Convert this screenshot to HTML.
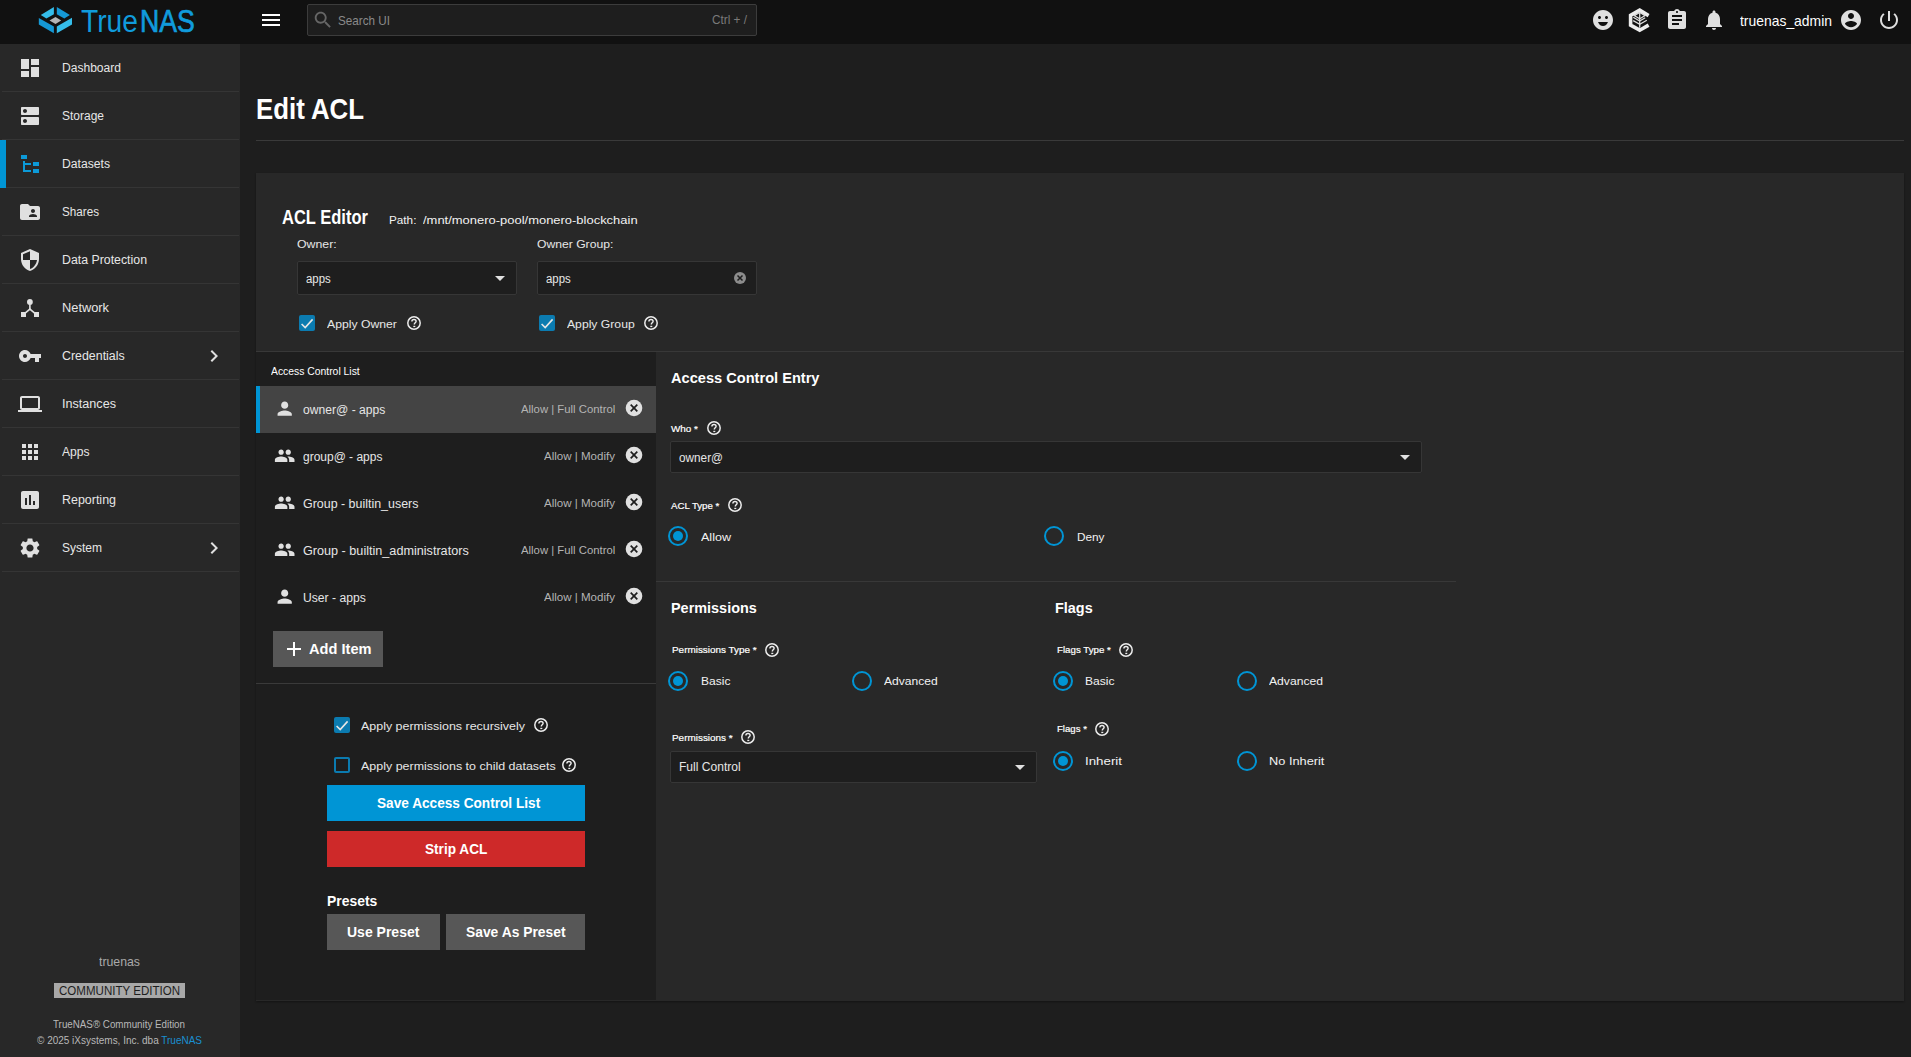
<!DOCTYPE html>
<html><head><meta charset="utf-8"><title>Edit ACL - TrueNAS</title>
<style>
html,body{margin:0;padding:0;width:1911px;height:1057px;overflow:hidden;background:#1e1e1e;}
body{position:relative;font-family:"Liberation Sans",sans-serif;}
.t{position:absolute;white-space:nowrap;line-height:1;transform-origin:0 50%;}
.r{position:absolute;display:block;}
</style></head><body>
<div class="r" style="left:0px;top:0px;width:1911px;height:44px;background:#111111;"></div>
<div class="r" style="left:0px;top:44px;width:240px;height:1013px;background:#282828;"></div>
<div class="r" style="left:240px;top:44px;width:1671px;height:1013px;background:#1e1e1e;"></div>
<svg class="r" style="left:34px;top:2px;" width="44" height="36" viewBox="0 0 44 36">
<polygon fill="#35bdea" points="19.9,5.1 6.8,12.9 12.4,16.5 19.9,12.3"/>
<polygon fill="#1598d5" points="22.8,5.1 35.9,12.9 30.3,16.5 22.8,12.3"/>
<polygon fill="#1598d5" points="4.8,16.0 19.9,24.5 19.9,31.2 4.8,22.6"/>
<polygon fill="#35bdea" points="22.8,24.5 38.0,15.8 38.0,22.6 22.8,31.2"/>
<polygon fill="#b5b5b5" points="21.5,15.0 27.2,18.6 21.5,22.0 15.5,18.6"/>
</svg>
<span id="t1" class="t" style="left:81.0px;top:5.76px;font-size:31px;color:#109bdc;transform:scaleX(0.9106);">True</span>
<span id="t2" class="t" style="left:139.6px;top:5.56px;font-size:31px;color:#109bdc;transform:scaleX(0.8596);-webkit-text-stroke:0.7px #109bdc;">NAS</span>
<svg class="r" style="left:259px;top:8px;" width="24" height="24" viewBox="0 0 24 24"><path fill="#ffffff" d="M3 18h18v-2H3v2zm0-5h18v-2H3v2zm0-7v2h18V6H3z"/></svg>
<div class="r" style="left:307px;top:4px;width:450px;height:32px;background:#1e1e1e;border:1px solid #3c3c3c;border-radius:2px;box-sizing:border-box;"></div>
<svg class="r" style="left:312px;top:9px;" width="22" height="22" viewBox="0 0 24 24"><path fill="#666666" d="M15.5 14h-.79l-.28-.27C15.41 12.59 16 11.11 16 9.5 16 5.91 13.09 3 9.5 3S3 5.91 3 9.5 5.91 16 9.5 16c1.61 0 3.09-.59 4.23-1.57l.27.28v.79l5 4.99L20.49 19l-4.99-5zm-6 0C7.01 14 5 11.99 5 9.5S7.01 5 9.5 5 14 7.01 14 9.5 11.99 14 9.5 14z"/></svg>
<span id="t3" class="t" style="left:338.0px;top:14.00px;font-size:13px;color:#8a8a8a;transform:scaleX(0.8995);">Search UI</span>
<span id="t4" class="t" style="left:712.0px;top:13.84px;font-size:12px;color:#7a7a7a;transform:scaleX(0.9812);">Ctrl + /</span>
<svg class="r" style="left:1591px;top:8px;" width="24" height="24" viewBox="0 0 24 24"><path fill="#e0e0e0" d="M11.99 2C6.47 2 2 6.48 2 12s4.47 10 9.99 10C17.52 22 22 17.52 22 12S17.52 2 11.99 2zM8.5 8c.83 0 1.5.67 1.5 1.5S9.33 11 8.5 11 7 10.33 7 9.5 7.670 8 8.5 8zM12 18c-2.28 0-4.22-1.66-5-4h10c-.78 2.34-2.72 4-5 4zm3.5-7c-.83 0-1.5-.67-1.5-1.5S14.67 8 15.5 8s1.5.67 1.5 1.5-.67 1.5-1.5 1.5z"/></svg>
<svg class="r" style="left:1665px;top:8px;" width="24" height="24" viewBox="0 0 24 24"><path fill="#e0e0e0" d="M19 3h-4.18C14.4 1.84 13.3 1 12 1c-1.3 0-2.4.84-2.82 2H5c-1.1 0-2 .9-2 2v14c0 1.1.9 2 2 2h14c1.1 0 2-.9 2-2V5c0-1.1-.9-2-2-2zm-7 0c.55 0 1 .45 1 1s-.45 1-1 1-1-.45-1-1 .45-1 1-1zm2 14H7v-2h7v2zm3-4H7v-2h10v2zm0-4H7V7h10v2z"/></svg>
<svg class="r" style="left:1624px;top:4px;" width="32" height="32" viewBox="0 0 32 32"><path d="M24.6 11.6L15.7 6.2L6.6 11.3V21.2L15.7 26.2L24.6 21.1" fill="none" stroke="#ececec" stroke-width="3.6" stroke-linejoin="miter"/><g fill="none" stroke="#dcdcdc" stroke-width="1.3"><path d="M10.2 11.6L15.7 8.4L21.2 11.6L15.7 14.8Z"/><path d="M15.7 8.4V23.8"/><path d="M9.2 16.6L15.7 20.3L22.8 16.2"/><path d="M9.2 13.2L15.7 17L21.2 13.8"/></g></svg>
<svg class="r" style="left:1702px;top:8px;" width="24" height="24" viewBox="0 0 24 24"><path fill="#e0e0e0" d="M12 22c1.1 0 2-.9 2-2h-4c0 1.1.89 2 2 2zm6-6v-5c0-3.07-1.64-5.64-4.5-6.32V4c0-.83-.67-1.5-1.5-1.5s-1.5.67-1.5 1.5v.68C7.63 5.36 6 7.92 6 11v5l-2 2v1h16v-1l-2-2z"/></svg>
<span id="t5" class="t" style="left:1740.0px;top:13.30px;font-size:15px;color:#ffffff;transform:scaleX(0.9271);">truenas_admin</span>
<svg class="r" style="left:1839px;top:8px;" width="24" height="24" viewBox="0 0 24 24"><path fill="#e0e0e0" d="M12 2C6.48 2 2 6.48 2 12s4.48 10 10 10 10-4.48 10-10S17.52 2 12 2zm0 3c1.66 0 3 1.34 3 3s-1.34 3-3 3-3-1.34-3-3 1.34-3 3-3zm0 14.2c-2.5 0-4.71-1.28-6-3.22.03-1.99 4-3.08 6-3.08 1.99 0 5.970 1.09 6 3.08-1.29 1.94-3.5 3.22-6 3.22z"/></svg>
<svg class="r" style="left:1877px;top:8px;" width="24" height="24" viewBox="0 0 24 24"><path fill="#e0e0e0" d="M13 3h-2v10h2V3zm4.83 2.17l-1.42 1.42C17.99 7.86 19 9.81 19 12c0 3.87-3.13 7-7 7s-7-3.13-7-7c0-2.19 1.01-4.14 2.58-5.42L6.17 5.17C4.23 6.82 3 9.26 3 12c0 4.97 4.03 9 9 9s9-4.03 9-9c0-2.74-1.23-5.18-3.17-6.83z"/></svg>
<div class="r" style="left:2px;top:91px;width:237px;height:1px;background:#353535;"></div>
<svg class="r" style="left:18px;top:56px;" width="24" height="24" viewBox="0 0 24 24"><path fill="#e0e0e0" d="M3 13h8V3H3v10zm0 8h8v-6H3v6zm10 0h8V11h-8v10zm0-18v6h8V3h-8z"/></svg>
<span id="t6" class="t" style="left:62.0px;top:61.59px;font-size:12.3px;color:#e6e6e6;transform:scaleX(0.9805);">Dashboard</span>
<div class="r" style="left:2px;top:139px;width:237px;height:1px;background:#353535;"></div>
<svg class="r" style="left:18px;top:104px;" width="24" height="24" viewBox="0 0 24 24"><path fill="#e0e0e0" d="M20 13H4c-.55 0-1 .45-1 1v6c0 .55.45 1 1 1h16c.55 0 1-.45 1-1v-6c0-.55-.45-1-1-1zM7 19c-1.1 0-2-.9-2-2s.9-2 2-2 2 .9 2 2-.9 2-2 2zM20 3H4c-.55 0-1 .45-1 1v6c0 .55.45 1 1 1h16c.55 0 1-.45 1-1V4c0-.55-.45-1-1-1zM7 9c-1.1 0-2-.9-2-2s.9-2 2-2 2 .9 2 2-.9 2-2 2z"/></svg>
<span id="t7" class="t" style="left:62.0px;top:109.59px;font-size:12.3px;color:#e6e6e6;transform:scaleX(0.9750);">Storage</span>
<div class="r" style="left:2px;top:187px;width:237px;height:1px;background:#353535;"></div>
<span id="t8" class="t" style="left:62.0px;top:157.59px;font-size:12.3px;color:#e6e6e6;transform:scaleX(0.9891);">Datasets</span>
<div class="r" style="left:2px;top:235px;width:237px;height:1px;background:#353535;"></div>
<svg class="r" style="left:18px;top:200px;" width="24" height="24" viewBox="0 0 24 24"><path fill="#e0e0e0" d="M20 6h-8l-2-2H4c-1.1 0-1.99.9-1.99 2L2 18c0 1.1.9 2 2 2h16c1.1 0 2-.9 2-2V8c0-1.1-.9-2-2-2zm-5 3c1.1 0 2 .9 2 2s-.9 2-2 2-2-.9-2-2 .9-2 2-2zm4 8h-8v-1c0-1.33 2.67-2 4-2s4 .67 4 2v1z"/></svg>
<span id="t9" class="t" style="left:62.0px;top:205.59px;font-size:12.3px;color:#e6e6e6;transform:scaleX(0.9495);">Shares</span>
<div class="r" style="left:2px;top:283px;width:237px;height:1px;background:#353535;"></div>
<svg class="r" style="left:18px;top:248px;" width="24" height="24" viewBox="0 0 24 24"><path fill="#e0e0e0" d="M12 1L3 5v6c0 5.55 3.84 10.74 9 12 5.16-1.26 9-6.450 9-12V5l-9-4zm0 10.99h7c-.53 4.12-3.28 7.79-7 8.94V12H5V6.3l7-3.11v8.8z"/></svg>
<span id="t10" class="t" style="left:62.0px;top:253.59px;font-size:12.3px;color:#e6e6e6;transform:scaleX(1.0028);">Data Protection</span>
<div class="r" style="left:2px;top:331px;width:237px;height:1px;background:#353535;"></div>
<span id="t11" class="t" style="left:62.0px;top:301.59px;font-size:12.3px;color:#e6e6e6;transform:scaleX(1.0419);">Network</span>
<div class="r" style="left:2px;top:379px;width:237px;height:1px;background:#353535;"></div>
<svg class="r" style="left:18px;top:344px;" width="24" height="24" viewBox="0 0 24 24"><path fill="#e0e0e0" d="M12.65 10C11.830 7.67 9.61 6 7 6c-3.31 0-6 2.69-6 6s2.69 6 6 6c2.61 0 4.83-1.67 5.65-4H17v4h4v-4h2v-4H12.65zM7 14c-1.1 0-2-.9-2-2s.9-2 2-2 2 .9 2 2-.9 2-2 2z"/></svg>
<span id="t12" class="t" style="left:62.0px;top:349.59px;font-size:12.3px;color:#e6e6e6;transform:scaleX(1.0080);">Credentials</span>
<svg class="r" style="left:202px;top:344px;" width="24" height="24" viewBox="0 0 24 24"><path fill="#e0e0e0" d="M10 6L8.59 7.41 13.17 12l-4.58 4.59L10 18l6-6z"/></svg>
<div class="r" style="left:2px;top:427px;width:237px;height:1px;background:#353535;"></div>
<svg class="r" style="left:18px;top:392px;" width="24" height="24" viewBox="0 0 24 24"><path fill="#e0e0e0" d="M20 18c1.1 0 1.99-.9 1.99-2L22 6c0-1.1-.9-2-2-2H4c-1.1 0-2 .9-2 2v10c0 1.1.9 2 2 2H0v2h24v-2h-4zM4 6h16v10H4V6z"/></svg>
<span id="t13" class="t" style="left:62.0px;top:397.59px;font-size:12.3px;color:#e6e6e6;transform:scaleX(1.0258);">Instances</span>
<div class="r" style="left:2px;top:475px;width:237px;height:1px;background:#353535;"></div>
<svg class="r" style="left:18px;top:440px;" width="24" height="24" viewBox="0 0 24 24"><path fill="#e0e0e0" d="M4 8h4V4H4v4zm6 12h4v-4h-4v4zm-6 0h4v-4H4v4zm0-6h4v-4H4v4zm6 0h4v-4h-4v4zm6-10v4h4V4h-4zm-6 4h4V4h-4v4zm6 6h4v-4h-4v4zm0 6h4v-4h-4v4z"/></svg>
<span id="t14" class="t" style="left:62.0px;top:445.59px;font-size:12.3px;color:#e6e6e6;transform:scaleX(0.9846);">Apps</span>
<div class="r" style="left:2px;top:523px;width:237px;height:1px;background:#353535;"></div>
<svg class="r" style="left:18px;top:488px;" width="24" height="24" viewBox="0 0 24 24"><path fill="#e0e0e0" d="M19 3H5c-1.1 0-2 .9-2 2v14c0 1.1.9 2 2 2h14c1.1 0 2-.9 2-2V5c0-1.1-.9-2-2-2zM9 17H7v-7h2v7zm4 0h-2V7h2v10zm4 0h-2v-4h2v4z"/></svg>
<span id="t15" class="t" style="left:62.0px;top:493.59px;font-size:12.3px;color:#e6e6e6;transform:scaleX(1.0126);">Reporting</span>
<div class="r" style="left:2px;top:571px;width:237px;height:1px;background:#353535;"></div>
<svg class="r" style="left:18px;top:536px;" width="24" height="24" viewBox="0 0 24 24"><path fill="#e0e0e0" d="M19.14 12.94c.04-.3.06-.61.06-.94 0-.32-.02-.64-.07-.94l2.030-1.58c.18-.14.23-.41.12-.61l-1.92-3.32c-.12-.22-.37-.29-.59-.22l-2.39.96c-.5-.38-1.03-.7-1.62-.94l-.36-2.54c-.04-.24-.24-.41-.48-.41h-3.84c-.24 0-.43.17-.47.41l-.36 2.54c-.59.24-1.13.57-1.62.94l-2.39-.96c-.22-.08-.47 0-.59.22L2.74 8.87c-.12.21-.08.47.12.61l2.03 1.58c-.05.3-.09.63-.09.94s.02.64.07.94l-2.03 1.58c-.18.14-.23.41-.12.61l1.92 3.32c.12.22.37.29.59.22l2.39-.96c.5.38 1.03.7 1.62.94l.36 2.54c.05.24.24.41.48.41h3.84c.24 0 .44-.17.47-.41l.36-2.54c.59-.24 1.13-.56 1.62-.94l2.39.96c.22.08.47 0 .59-.22l1.92-3.32c.12-.22.07-.47-.12-.61l-2.01-1.58zM12 15.6c-1.98 0-3.6-1.62-3.6-3.6s1.62-3.6 3.6-3.6 3.6 1.62 3.6 3.6-1.62 3.6-3.6 3.6z"/></svg>
<span id="t16" class="t" style="left:62.0px;top:541.59px;font-size:12.3px;color:#e6e6e6;transform:scaleX(0.9756);">System</span>
<svg class="r" style="left:202px;top:536px;" width="24" height="24" viewBox="0 0 24 24"><path fill="#e0e0e0" d="M10 6L8.59 7.41 13.17 12l-4.58 4.59L10 18l6-6z"/></svg>
<div class="r" style="left:0px;top:140px;width:6px;height:48px;background:#0095d5;"></div>
<svg class="r" style="left:21px;top:155px;" width="18" height="18" viewBox="0 0 18 18"><g fill="#0c9ad8"><rect x="0" y="0" width="6" height="4"/><rect x="2" y="6" width="2" height="11"/><rect x="4" y="8" width="6" height="2"/><rect x="2" y="15" width="8" height="2"/><rect x="12" y="7" width="6" height="4"/><rect x="12" y="14" width="6" height="4"/></g></svg>
<svg class="r" style="left:21px;top:299px;" width="18" height="18" viewBox="0 0 18 18"><g fill="#e0e0e0" stroke="#e0e0e0"><circle cx="8.9" cy="2.9" r="2.9" stroke="none"/><line x1="8.9" y1="3" x2="8.9" y2="10.4" stroke-width="1.6"/><path d="M2.6 15.4L8.9 10.1L15.2 15.4" fill="none" stroke-width="1.7"/><rect x="0" y="13" width="5" height="5" stroke="none"/><rect x="13" y="13" width="5" height="5" stroke="none"/></g></svg>
<span id="t17" class="t" style="left:99.0px;top:954.70px;font-size:13px;color:#aaaaaa;transform:scaleX(0.9452);">truenas</span>
<div class="r" style="left:54px;top:983px;width:131px;height:15px;background:#a8a8a8;"></div>
<span id="t18" class="t" style="left:58.6px;top:984.84px;font-size:12px;color:#1e1e1e;transform:scaleX(0.9620);">COMMUNITY EDITION</span>
<span id="t19" class="t" style="left:53.0px;top:1020.44px;font-size:10px;color:#b8b8b8;transform:scaleX(0.9790);">TrueNAS® Community Edition</span>
<span id="t20" class="t" style="left:37.0px;top:1036.24px;font-size:10px;color:#b8b8b8;transform:scaleX(0.9986);">© 2025 iXsystems, Inc. dba <span style="color:#1a8fd0">TrueNAS</span></span>
<span id="t21" class="t" style="left:256.0px;top:93.61px;font-size:30px;color:#ffffff;font-weight:700;transform:scaleX(0.8602);">Edit ACL</span>
<div class="r" style="left:256px;top:140px;width:1648px;height:1px;background:#3a3a3a;"></div>
<div class="r" style="left:256px;top:173px;width:1648px;height:828px;background:#282828;box-shadow:0 1px 2px rgba(0,0,0,.35);"></div>
<span id="t22" class="t" style="left:282.0px;top:207.15px;font-size:20.5px;color:#ffffff;font-weight:700;transform:scaleX(0.8061);">ACL Editor</span>
<span id="t23" class="t" style="left:388.5px;top:215.23px;font-size:11.3px;color:#f2f2f2;transform:scaleX(1.0382);">Path:</span>
<span id="t24" class="t" style="left:422.8px;top:215.23px;font-size:11.3px;color:#f2f2f2;transform:scaleX(1.1468);">/mnt/monero-pool/monero-blockchain</span>
<span id="t25" class="t" style="left:297.0px;top:238.69px;font-size:11px;color:#e6e6e6;transform:scaleX(1.1193);">Owner:</span>
<span id="t26" class="t" style="left:537.0px;top:238.69px;font-size:11px;color:#e6e6e6;transform:scaleX(1.1043);">Owner Group:</span>
<div class="r" style="left:297px;top:261px;width:220px;height:34px;background:#1e1e1e;border:1px solid #363636;box-sizing:border-box;border-radius:2px;"></div>
<span id="t27" class="t" style="left:306.3px;top:272.84px;font-size:12px;color:#e6e6e6;transform:scaleX(0.9489);">apps</span>
<svg class="r" style="left:495px;top:276px;" width="10" height="5" viewBox="0 0 10 5"><polygon fill="#e0e0e0" points="0,0 10,0 5,5"/></svg>
<div class="r" style="left:537px;top:261px;width:220px;height:34px;background:#1e1e1e;border:1px solid #363636;box-sizing:border-box;border-radius:2px;"></div>
<span id="t28" class="t" style="left:546.2px;top:272.84px;font-size:12px;color:#e6e6e6;transform:scaleX(0.9489);">apps</span>
<svg class="r" style="left:734px;top:272px;" width="12" height="12" viewBox="0 0 12 12"><circle cx="6" cy="6" r="6" fill="#8c8c8c"/><path d="M3.5 3.5L8.5 8.5M8.5 3.5L3.5 8.5" stroke="#1e1e1e" stroke-width="1.5"/></svg>
<div class="r" style="left:299px;top:315px;width:16px;height:16px;background:#0b7bb0;border-radius:2px;"></div>
<svg class="r" style="left:299px;top:315px;" width="16" height="16" viewBox="0 0 16 16"><path d="M2.6 9.0L6.2 12.5L13.6 4.4" fill="none" stroke="#e6e6e6" stroke-width="1.6"/></svg>
<span id="t29" class="t" style="left:327.0px;top:318.69px;font-size:11px;color:#e6e6e6;transform:scaleX(1.1098);">Apply Owner</span>
<svg class="r" style="left:406.6px;top:315.5px;" width="14" height="14" viewBox="0 0 14 14"><circle cx="7" cy="7" r="6.2" fill="none" stroke="#ececec" stroke-width="1.5"/><path d="M4.9 5.5C4.9 4.2 5.8 3.4 7 3.4C8.2 3.4 9.1 4.2 9.1 5.3C9.1 6.7 7.3 6.9 7.3 8.4" fill="none" stroke="#ececec" stroke-width="1.45"/><rect x="6.3" y="9.8" width="2" height="1.3" fill="#ececec"/></svg>
<div class="r" style="left:539px;top:315px;width:16px;height:16px;background:#0b7bb0;border-radius:2px;"></div>
<svg class="r" style="left:539px;top:315px;" width="16" height="16" viewBox="0 0 16 16"><path d="M2.6 9.0L6.2 12.5L13.6 4.4" fill="none" stroke="#e6e6e6" stroke-width="1.6"/></svg>
<span id="t30" class="t" style="left:567.0px;top:318.69px;font-size:11px;color:#e6e6e6;transform:scaleX(1.1070);">Apply Group</span>
<svg class="r" style="left:643.6px;top:315.5px;" width="14" height="14" viewBox="0 0 14 14"><circle cx="7" cy="7" r="6.2" fill="none" stroke="#ececec" stroke-width="1.5"/><path d="M4.9 5.5C4.9 4.2 5.8 3.4 7 3.4C8.2 3.4 9.1 4.2 9.1 5.3C9.1 6.7 7.3 6.9 7.3 8.4" fill="none" stroke="#ececec" stroke-width="1.45"/><rect x="6.3" y="9.8" width="2" height="1.3" fill="#ececec"/></svg>
<div class="r" style="left:256px;top:351px;width:1648px;height:1px;background:#383838;"></div>
<div class="r" style="left:256px;top:352px;width:400px;height:648px;background:#1e1e1e;"></div>
<span id="t31" class="t" style="left:271.4px;top:365.69px;font-size:11px;color:#ffffff;transform:scaleX(0.9421);">Access Control List</span>
<div class="r" style="left:256px;top:386px;width:400px;height:47px;background:#444444;"></div>
<div class="r" style="left:256px;top:386px;width:4px;height:47px;background:#0095d5;"></div>
<svg class="r" style="left:273.7px;top:397.8px;" width="21.4" height="21.4" viewBox="0 0 24 24"><path fill="#e0e0e0" d="M12 12c2.21 0 4-1.79 4-4s-1.79-4-4-4-4 1.79-4 4 1.79 4 4 4zm0 2c-2.67 0-8 1.34-8 4v2h16v-2c0-2.66-5.33-4-8-4z"/></svg>
<span id="t32" class="t" style="left:303.0px;top:403.64px;font-size:12px;color:#e6e6e6;transform:scaleX(1.0090);">owner@ - apps</span>
<span id="t33" class="t" style="left:520.7px;top:403.57px;font-size:11.5px;color:#b4b4b4;transform:scaleX(0.9858);">Allow | Full Control</span>
<svg class="r" style="left:624px;top:398.0px;" width="20" height="20" viewBox="0 0 20 20"><circle cx="10" cy="10" r="8.3" fill="#e0e0e0"/><path d="M6.7 6.7L13.3 13.3M13.3 6.7L6.7 13.3" stroke="#1e1e1e" stroke-width="1.7"/></svg>
<svg class="r" style="left:273.7px;top:444.8px;" width="21.4" height="21.4" viewBox="0 0 24 24"><path fill="#e0e0e0" d="M16 11c1.66 0 2.99-1.34 2.99-3S17.66 5 16 5c-1.66 0-3 1.34-3 3s1.34 3 3 3zm-8 0c1.66 0 2.99-1.34 2.99-3S9.66 5 8 5C6.34 5 5 6.34 5 8s1.34 3 3 3zm0 2c-2.33 0-7 1.17-7 3.5V19h14v-2.5c0-2.33-4.67-3.5-7-3.5zm8 0c-.29 0-.62.02-.97.05 1.16.84 1.97 1.97 1.97 3.45V19h6v-2.5c0-2.33-4.67-3.5-7-3.5z"/></svg>
<span id="t34" class="t" style="left:303.0px;top:450.64px;font-size:12px;color:#e6e6e6;transform:scaleX(0.9980);">group@ - apps</span>
<span id="t35" class="t" style="left:544.0px;top:450.57px;font-size:11.5px;color:#b4b4b4;transform:scaleX(1.0038);">Allow | Modify</span>
<svg class="r" style="left:624px;top:445.0px;" width="20" height="20" viewBox="0 0 20 20"><circle cx="10" cy="10" r="8.3" fill="#e0e0e0"/><path d="M6.7 6.7L13.3 13.3M13.3 6.7L6.7 13.3" stroke="#1e1e1e" stroke-width="1.7"/></svg>
<svg class="r" style="left:273.7px;top:491.8px;" width="21.4" height="21.4" viewBox="0 0 24 24"><path fill="#e0e0e0" d="M16 11c1.66 0 2.99-1.34 2.99-3S17.66 5 16 5c-1.66 0-3 1.34-3 3s1.34 3 3 3zm-8 0c1.66 0 2.99-1.34 2.99-3S9.66 5 8 5C6.34 5 5 6.34 5 8s1.34 3 3 3zm0 2c-2.33 0-7 1.17-7 3.5V19h14v-2.5c0-2.33-4.67-3.5-7-3.5zm8 0c-.29 0-.62.02-.97.05 1.16.84 1.97 1.97 1.97 3.45V19h6v-2.5c0-2.33-4.67-3.5-7-3.5z"/></svg>
<span id="t36" class="t" style="left:303.0px;top:497.64px;font-size:12px;color:#e6e6e6;transform:scaleX(1.0360);">Group - builtin_users</span>
<span id="t37" class="t" style="left:544.0px;top:497.57px;font-size:11.5px;color:#b4b4b4;transform:scaleX(1.0038);">Allow | Modify</span>
<svg class="r" style="left:624px;top:492.0px;" width="20" height="20" viewBox="0 0 20 20"><circle cx="10" cy="10" r="8.3" fill="#e0e0e0"/><path d="M6.7 6.7L13.3 13.3M13.3 6.7L6.7 13.3" stroke="#1e1e1e" stroke-width="1.7"/></svg>
<svg class="r" style="left:273.7px;top:538.8px;" width="21.4" height="21.4" viewBox="0 0 24 24"><path fill="#e0e0e0" d="M16 11c1.66 0 2.99-1.34 2.99-3S17.66 5 16 5c-1.66 0-3 1.34-3 3s1.34 3 3 3zm-8 0c1.66 0 2.99-1.34 2.99-3S9.66 5 8 5C6.34 5 5 6.34 5 8s1.34 3 3 3zm0 2c-2.33 0-7 1.17-7 3.5V19h14v-2.5c0-2.33-4.67-3.5-7-3.5zm8 0c-.29 0-.62.02-.97.05 1.16.84 1.97 1.97 1.97 3.45V19h6v-2.5c0-2.33-4.67-3.5-7-3.5z"/></svg>
<span id="t38" class="t" style="left:303.0px;top:544.64px;font-size:12px;color:#e6e6e6;transform:scaleX(1.0527);">Group - builtin_administrators</span>
<span id="t39" class="t" style="left:520.7px;top:544.57px;font-size:11.5px;color:#b4b4b4;transform:scaleX(0.9858);">Allow | Full Control</span>
<svg class="r" style="left:624px;top:539.0px;" width="20" height="20" viewBox="0 0 20 20"><circle cx="10" cy="10" r="8.3" fill="#e0e0e0"/><path d="M6.7 6.7L13.3 13.3M13.3 6.7L6.7 13.3" stroke="#1e1e1e" stroke-width="1.7"/></svg>
<svg class="r" style="left:273.7px;top:585.8px;" width="21.4" height="21.4" viewBox="0 0 24 24"><path fill="#e0e0e0" d="M12 12c2.21 0 4-1.79 4-4s-1.79-4-4-4-4 1.79-4 4 1.79 4 4 4zm0 2c-2.67 0-8 1.34-8 4v2h16v-2c0-2.66-5.33-4-8-4z"/></svg>
<span id="t40" class="t" style="left:303.0px;top:591.64px;font-size:12px;color:#e6e6e6;transform:scaleX(1.0108);">User - apps</span>
<span id="t41" class="t" style="left:544.0px;top:591.57px;font-size:11.5px;color:#b4b4b4;transform:scaleX(1.0038);">Allow | Modify</span>
<svg class="r" style="left:624px;top:586.0px;" width="20" height="20" viewBox="0 0 20 20"><circle cx="10" cy="10" r="8.3" fill="#e0e0e0"/><path d="M6.7 6.7L13.3 13.3M13.3 6.7L6.7 13.3" stroke="#1e1e1e" stroke-width="1.7"/></svg>
<div class="r" style="left:273px;top:631px;width:110px;height:36px;background:#575757;"></div>
<svg class="r" style="left:282px;top:637px;" width="24" height="24" viewBox="0 0 24 24"><path fill="#ffffff" d="M19 13h-6v6h-2v-6H5v-2h6V5h2v6h6v2z"/></svg>
<span id="t42" class="t" style="left:308.8px;top:641.10px;font-size:15px;color:#ffffff;font-weight:700;transform:scaleX(0.9739);">Add Item</span>
<div class="r" style="left:256px;top:683px;width:400px;height:1px;background:#3a3a3a;"></div>
<div class="r" style="left:334px;top:717px;width:16px;height:16px;background:#0b7bb0;border-radius:2px;"></div>
<svg class="r" style="left:334px;top:717px;" width="16" height="16" viewBox="0 0 16 16"><path d="M2.6 9.0L6.2 12.5L13.6 4.4" fill="none" stroke="#e6e6e6" stroke-width="1.6"/></svg>
<span id="t43" class="t" style="left:361.2px;top:720.69px;font-size:11px;color:#e6e6e6;transform:scaleX(1.1319);">Apply permissions recursively</span>
<svg class="r" style="left:533.6px;top:717.5px;" width="14" height="14" viewBox="0 0 14 14"><circle cx="7" cy="7" r="6.2" fill="none" stroke="#ececec" stroke-width="1.5"/><path d="M4.9 5.5C4.9 4.2 5.8 3.4 7 3.4C8.2 3.4 9.1 4.2 9.1 5.3C9.1 6.7 7.3 6.9 7.3 8.4" fill="none" stroke="#ececec" stroke-width="1.45"/><rect x="6.3" y="9.8" width="2" height="1.3" fill="#ececec"/></svg>
<div class="r" style="left:334px;top:757px;width:16px;height:16px;background:transparent;border:2px solid #0b7bb0;box-sizing:border-box;border-radius:2px;"></div>
<span id="t44" class="t" style="left:361.2px;top:760.69px;font-size:11px;color:#e6e6e6;transform:scaleX(1.1332);">Apply permissions to child datasets</span>
<svg class="r" style="left:562.1px;top:757.5px;" width="14" height="14" viewBox="0 0 14 14"><circle cx="7" cy="7" r="6.2" fill="none" stroke="#ececec" stroke-width="1.5"/><path d="M4.9 5.5C4.9 4.2 5.8 3.4 7 3.4C8.2 3.4 9.1 4.2 9.1 5.3C9.1 6.7 7.3 6.9 7.3 8.4" fill="none" stroke="#ececec" stroke-width="1.45"/><rect x="6.3" y="9.8" width="2" height="1.3" fill="#ececec"/></svg>
<div class="r" style="left:327px;top:785px;width:258px;height:36px;background:#0095d5;"></div>
<span id="t45" class="t" style="left:376.6px;top:794.80px;font-size:15px;color:#ffffff;font-weight:700;transform:scaleX(0.9091);">Save Access Control List</span>
<div class="r" style="left:327px;top:831px;width:258px;height:36px;background:#ce2929;"></div>
<span id="t46" class="t" style="left:424.7px;top:841.20px;font-size:15px;color:#ffffff;font-weight:700;transform:scaleX(0.9080);">Strip ACL</span>
<span id="t47" class="t" style="left:327.0px;top:892.90px;font-size:15px;color:#ffffff;font-weight:700;transform:scaleX(0.9277);">Presets</span>
<div class="r" style="left:327px;top:914px;width:113px;height:36px;background:#575757;"></div>
<span id="t48" class="t" style="left:347.3px;top:923.90px;font-size:15px;color:#ffffff;font-weight:700;transform:scaleX(0.9334);">Use Preset</span>
<div class="r" style="left:446px;top:914px;width:139px;height:36px;background:#575757;"></div>
<span id="t49" class="t" style="left:466.0px;top:923.90px;font-size:15px;color:#ffffff;font-weight:700;transform:scaleX(0.9225);">Save As Preset</span>
<span id="t50" class="t" style="left:671.0px;top:371.23px;font-size:14.5px;color:#ffffff;font-weight:700;transform:scaleX(1.0070);">Access Control Entry</span>
<span id="t51" class="t" style="left:671.0px;top:423.86px;font-size:9.5px;color:#ffffff;transform:scaleX(1.0396);-webkit-text-stroke:0.2px #ffffff;">Who *</span>
<svg class="r" style="left:706.6px;top:420.5px;" width="14" height="14" viewBox="0 0 14 14"><circle cx="7" cy="7" r="6.2" fill="none" stroke="#ececec" stroke-width="1.5"/><path d="M4.9 5.5C4.9 4.2 5.8 3.4 7 3.4C8.2 3.4 9.1 4.2 9.1 5.3C9.1 6.7 7.3 6.9 7.3 8.4" fill="none" stroke="#ececec" stroke-width="1.45"/><rect x="6.3" y="9.8" width="2" height="1.3" fill="#ececec"/></svg>
<div class="r" style="left:670px;top:441px;width:752px;height:32px;background:#1e1e1e;border:1px solid #363636;box-sizing:border-box;border-radius:2px;"></div>
<span id="t52" class="t" style="left:679.3px;top:452.24px;font-size:12px;color:#e6e6e6;transform:scaleX(0.9805);">owner@</span>
<svg class="r" style="left:1400px;top:455px;" width="10" height="5" viewBox="0 0 10 5"><polygon fill="#e0e0e0" points="0,0 10,0 5,5"/></svg>
<span id="t53" class="t" style="left:671.0px;top:500.86px;font-size:9.5px;color:#ffffff;transform:scaleX(1.0162);-webkit-text-stroke:0.2px #ffffff;">ACL Type *</span>
<svg class="r" style="left:727.6px;top:497.5px;" width="14" height="14" viewBox="0 0 14 14"><circle cx="7" cy="7" r="6.2" fill="none" stroke="#ececec" stroke-width="1.5"/><path d="M4.9 5.5C4.9 4.2 5.8 3.4 7 3.4C8.2 3.4 9.1 4.2 9.1 5.3C9.1 6.7 7.3 6.9 7.3 8.4" fill="none" stroke="#ececec" stroke-width="1.45"/><rect x="6.3" y="9.8" width="2" height="1.3" fill="#ececec"/></svg>
<svg class="r" style="left:667px;top:525px;" width="22" height="22" viewBox="0 0 22 22"><circle cx="11" cy="11" r="9" fill="none" stroke="#0095d5" stroke-width="2"/><circle cx="11" cy="11" r="5" fill="#0095d5"/></svg>
<span id="t54" class="t" style="left:700.5px;top:531.93px;font-size:11.3px;color:#f2f2f2;transform:scaleX(1.1111);">Allow</span>
<svg class="r" style="left:1043px;top:525px;" width="22" height="22" viewBox="0 0 22 22"><circle cx="11" cy="11" r="9" fill="none" stroke="#0095d5" stroke-width="2"/></svg>
<span id="t55" class="t" style="left:1076.5px;top:531.93px;font-size:11.3px;color:#f2f2f2;transform:scaleX(1.0427);">Deny</span>
<div class="r" style="left:656px;top:581px;width:800px;height:1px;background:#383838;"></div>
<span id="t56" class="t" style="left:671.2px;top:599.90px;font-size:15px;color:#ffffff;font-weight:700;transform:scaleX(0.9617);">Permissions</span>
<span id="t57" class="t" style="left:1055.4px;top:599.90px;font-size:15px;color:#ffffff;font-weight:700;transform:scaleX(0.9620);">Flags</span>
<span id="t58" class="t" style="left:671.7px;top:644.56px;font-size:9.5px;color:#ffffff;transform:scaleX(1.0439);-webkit-text-stroke:0.2px #ffffff;">Permissions Type *</span>
<svg class="r" style="left:764.6px;top:642.5px;" width="14" height="14" viewBox="0 0 14 14"><circle cx="7" cy="7" r="6.2" fill="none" stroke="#ececec" stroke-width="1.5"/><path d="M4.9 5.5C4.9 4.2 5.8 3.4 7 3.4C8.2 3.4 9.1 4.2 9.1 5.3C9.1 6.7 7.3 6.9 7.3 8.4" fill="none" stroke="#ececec" stroke-width="1.45"/><rect x="6.3" y="9.8" width="2" height="1.3" fill="#ececec"/></svg>
<svg class="r" style="left:667px;top:670px;" width="22" height="22" viewBox="0 0 22 22"><circle cx="11" cy="11" r="9" fill="none" stroke="#0095d5" stroke-width="2"/><circle cx="11" cy="11" r="5" fill="#0095d5"/></svg>
<span id="t59" class="t" style="left:700.6px;top:676.43px;font-size:11.3px;color:#f2f2f2;transform:scaleX(1.0643);">Basic</span>
<svg class="r" style="left:851px;top:670px;" width="22" height="22" viewBox="0 0 22 22"><circle cx="11" cy="11" r="9" fill="none" stroke="#0095d5" stroke-width="2"/></svg>
<span id="t60" class="t" style="left:883.6px;top:676.43px;font-size:11.3px;color:#f2f2f2;transform:scaleX(1.0687);">Advanced</span>
<span id="t61" class="t" style="left:671.7px;top:732.66px;font-size:9.5px;color:#ffffff;transform:scaleX(1.0451);-webkit-text-stroke:0.2px #ffffff;">Permissions *</span>
<svg class="r" style="left:740.6px;top:729.5px;" width="14" height="14" viewBox="0 0 14 14"><circle cx="7" cy="7" r="6.2" fill="none" stroke="#ececec" stroke-width="1.5"/><path d="M4.9 5.5C4.9 4.2 5.8 3.4 7 3.4C8.2 3.4 9.1 4.2 9.1 5.3C9.1 6.7 7.3 6.9 7.3 8.4" fill="none" stroke="#ececec" stroke-width="1.45"/><rect x="6.3" y="9.8" width="2" height="1.3" fill="#ececec"/></svg>
<div class="r" style="left:670px;top:751px;width:367px;height:32px;background:#1e1e1e;border:1px solid #363636;box-sizing:border-box;border-radius:2px;"></div>
<span id="t62" class="t" style="left:679.4px;top:761.04px;font-size:12px;color:#e6e6e6;transform:scaleX(1.0056);">Full Control</span>
<svg class="r" style="left:1015px;top:765px;" width="10" height="5" viewBox="0 0 10 5"><polygon fill="#e0e0e0" points="0,0 10,0 5,5"/></svg>
<span id="t63" class="t" style="left:1056.6px;top:644.56px;font-size:9.5px;color:#ffffff;transform:scaleX(1.0239);-webkit-text-stroke:0.2px #ffffff;">Flags Type *</span>
<svg class="r" style="left:1118.6px;top:642.5px;" width="14" height="14" viewBox="0 0 14 14"><circle cx="7" cy="7" r="6.2" fill="none" stroke="#ececec" stroke-width="1.5"/><path d="M4.9 5.5C4.9 4.2 5.8 3.4 7 3.4C8.2 3.4 9.1 4.2 9.1 5.3C9.1 6.7 7.3 6.9 7.3 8.4" fill="none" stroke="#ececec" stroke-width="1.45"/><rect x="6.3" y="9.8" width="2" height="1.3" fill="#ececec"/></svg>
<svg class="r" style="left:1052px;top:670px;" width="22" height="22" viewBox="0 0 22 22"><circle cx="11" cy="11" r="9" fill="none" stroke="#0095d5" stroke-width="2"/><circle cx="11" cy="11" r="5" fill="#0095d5"/></svg>
<span id="t64" class="t" style="left:1085.3px;top:676.43px;font-size:11.3px;color:#f2f2f2;transform:scaleX(1.0679);">Basic</span>
<svg class="r" style="left:1236px;top:670px;" width="22" height="22" viewBox="0 0 22 22"><circle cx="11" cy="11" r="9" fill="none" stroke="#0095d5" stroke-width="2"/></svg>
<span id="t65" class="t" style="left:1268.5px;top:676.43px;font-size:11.3px;color:#f2f2f2;transform:scaleX(1.0746);">Advanced</span>
<span id="t66" class="t" style="left:1056.6px;top:724.36px;font-size:9.5px;color:#ffffff;transform:scaleX(1.0109);-webkit-text-stroke:0.2px #ffffff;">Flags *</span>
<svg class="r" style="left:1094.6px;top:721.5px;" width="14" height="14" viewBox="0 0 14 14"><circle cx="7" cy="7" r="6.2" fill="none" stroke="#ececec" stroke-width="1.5"/><path d="M4.9 5.5C4.9 4.2 5.8 3.4 7 3.4C8.2 3.4 9.1 4.2 9.1 5.3C9.1 6.7 7.3 6.9 7.3 8.4" fill="none" stroke="#ececec" stroke-width="1.45"/><rect x="6.3" y="9.8" width="2" height="1.3" fill="#ececec"/></svg>
<svg class="r" style="left:1052px;top:750px;" width="22" height="22" viewBox="0 0 22 22"><circle cx="11" cy="11" r="9" fill="none" stroke="#0095d5" stroke-width="2"/><circle cx="11" cy="11" r="5" fill="#0095d5"/></svg>
<span id="t67" class="t" style="left:1085.3px;top:756.43px;font-size:11.3px;color:#f2f2f2;transform:scaleX(1.1781);">Inherit</span>
<svg class="r" style="left:1236px;top:750px;" width="22" height="22" viewBox="0 0 22 22"><circle cx="11" cy="11" r="9" fill="none" stroke="#0095d5" stroke-width="2"/></svg>
<span id="t68" class="t" style="left:1268.5px;top:756.43px;font-size:11.3px;color:#f2f2f2;transform:scaleX(1.1310);">No Inherit</span>
</body></html>
